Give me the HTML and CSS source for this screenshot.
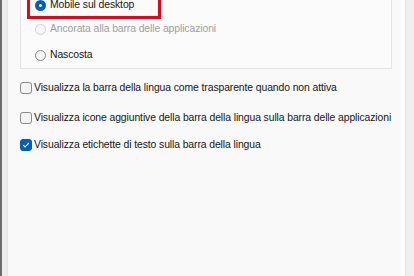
FILE: index.html
```html
<!DOCTYPE html>
<html>
<head>
    <title>Barra della lingua</title>
    <link rel="stylesheet" href="styles.css">
</head>
<body>
    <div class="edge"></div>
    <div class="panel">
        <div class="group">
            <label class="radio">
                <span class="dot checked"></span>
                Mobile sul desktop
            </label>
            <label class="radio disabled second">
                <span class="dot"></span>
                Ancorata alla barra delle applicazioni
            </label>
            <label class="radio third">
                <span class="dot"></span>
                Nascosta
            </label>
        </div>

        <label class="check first">
            <span class="box"></span>
            Visualizza la barra della lingua come trasparente quando non attiva
        </label>
        <label class="check">
            <span class="box"></span>
            Visualizza icone aggiuntive della barra della lingua sulla barra delle applicazioni
        </label>
        <label class="check last">
            <span class="box on">
                <svg width="8" height="8" viewBox="0 0 8 8"><path d="M1.2 4.2 L3.1 6 L6.9 2" fill="none" stroke="#fff" stroke-width="1.1"/></svg>
            </span>
            Visualizza etichette di testo sulla barra della lingua
        </label>

        <!-- riquadro rosso di evidenziazione -->
        <div class="highlight"></div>
    </div>
    <div class="side"></div>
</body>
</html>
```

FILE: styles.css
```css
html, body {
    margin: 0;
    height: 276px;
    overflow: hidden;
}
body {
    display: flex;
    font-family: "Liberation Sans", Arial, sans-serif;
    font-size: 10.4px;
    letter-spacing: -0.1px;
    color: #161616;
    background-color: #f9f9f9;
}
.edge {
    width: 5px;
    border-left: 2px solid #6e6e6e;
    border-right: 1px solid #e3e3e3;
    background-color: #ececec;
}
.panel {
    position: relative;
    width: 394px;
    border-right: 3px solid #fcfcfc;
}
.side {
    flex: 1;
    border-left: 1px solid #e2e2e2;
    background-color: #efefef;
}
.group {
    margin: -2px 0 0 12px;
    padding: 0 0 6px 14px;
    box-sizing: border-box;
    width: 372px;
    border: 1px solid #e5e5e5;
    border-top: none;
    background-color: #fbfbfb;
}
.radio, .check {
    display: flex;
    align-items: center;
    height: 14px;
    line-height: 14px;
    white-space: nowrap;
}
.radio.second {
    margin-top: 10px;
}
.radio.third {
    margin-top: 12px;
}
.disabled {
    color: #a0a0a0;
}
.dot {
    flex-shrink: 0;
    width: 9px;
    height: 9px;
    margin-right: 4px;
    border: 1px solid #8a8a8a;
    border-radius: 50%;
    background-color: #f6f6f6;
}
.disabled .dot {
    border-color: #d2d2d2;
    background-color: #f7f7f7;
}
.dot.checked {
    width: 3px;
    height: 3px;
    border: 4px solid #005fb8;
    background-color: #fff;
}
.check {
    margin-left: 12px;
    margin-top: 16px;
}
.check.first {
    margin-top: 12px;
}
.check.last {
    margin-top: 13px;
}
.box {
    flex-shrink: 0;
    display: flex;
    align-items: center;
    justify-content: center;
    width: 10px;
    height: 10px;
    margin-right: 2px;
    border: 1px solid #8a8a8a;
    border-radius: 3px;
    background-color: #f3f3f3;
}
.box.on {
    border-color: #005fb8;
    background-color: #005fb8;
}
.highlight {
    position: absolute;
    left: 19px;
    top: -10px;
    width: 128px;
    height: 23px;
    border: 3px solid #e3061b;
}
```
